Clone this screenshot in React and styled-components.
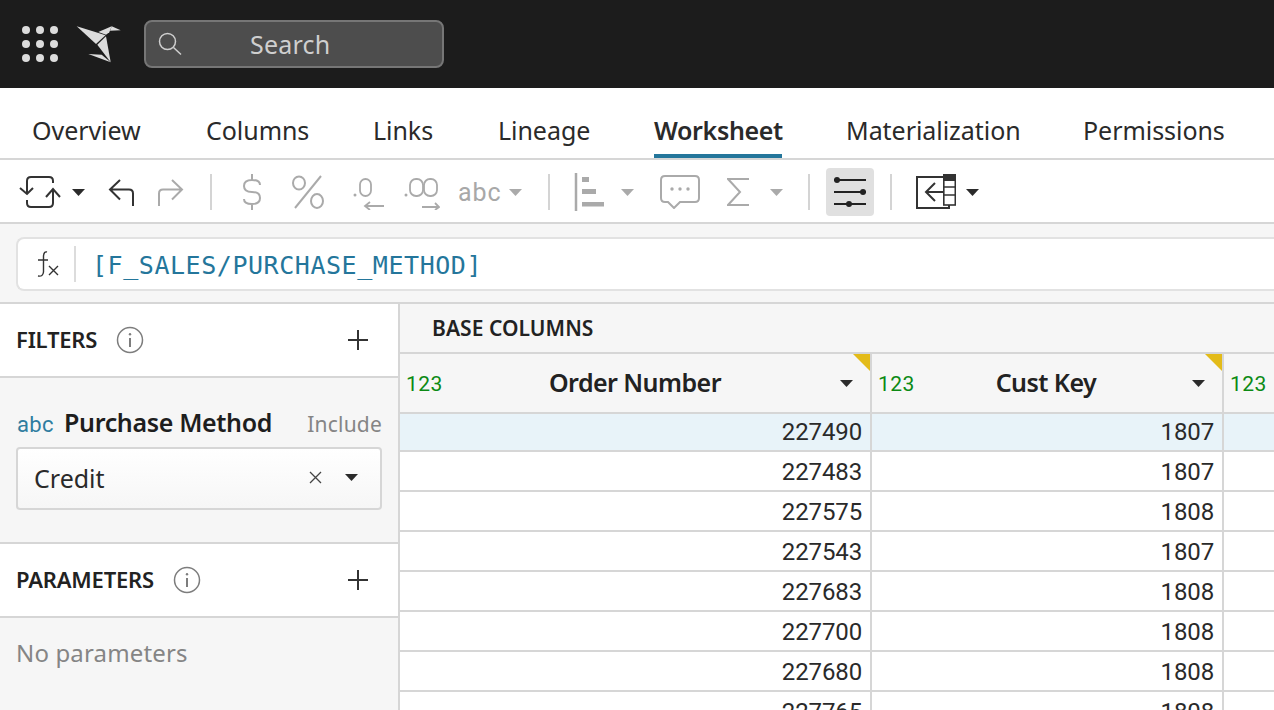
import React from 'react';
import styled, { createGlobalStyle } from 'styled-components';

const Global = createGlobalStyle`
  html, body { margin: 0; padding: 0; height: 100%; overflow: hidden; background: #fff; }
  #root { height: 100%; }
  * { box-sizing: border-box; }
`;

const SANS = `"Noto Sans", "Open Sans", sans-serif`;
const NUM = `Roboto, "Noto Sans", sans-serif`;
const LINE = '#d6d6d6';

const Page = styled.div`
  width: 1274px;
  height: 710px;
  overflow: hidden;
  display: flex;
  flex-direction: column;
  font-family: ${SANS};
  color: #1e1e1e;
`;

const TopBar = styled.header`
  height: 88px;
  flex: none;
  background: #1c1c1c;
  display: flex;
  align-items: center;
  padding: 0 0 0 22px;
`;

const SearchBox = styled.div`
  width: 300px;
  height: 48px;
  margin-left: 22px;
  background: #4d4d4d;
  border: 2px solid #767676;
  border-radius: 8px;
  display: flex;
  align-items: center;
  padding-left: 12px;
  color: #cfcfcf;
  font-size: 25px;
`;

const SearchText = styled.span`
  margin-left: 68px;
  letter-spacing: 0.2px;
`;

const Tabs = styled.nav`
  height: 72px;
  flex: none;
  display: flex;
  gap: 64px;
  padding-left: 32px;
  border-bottom: 2px solid ${LINE};
`;

const Tab = styled.div`
  width: ${p => p.$w}px;
  height: 70px;
  padding-top: 24px;
  font-size: 25px;
  line-height: 36px;
  white-space: nowrap;
  font-weight: ${p => (p.$active ? 600 : 400)};
  letter-spacing: ${p => (p.$active ? '-0.35px' : '-0.05px')};
  color: #2a2a2a;
  border-bottom: ${p => (p.$active ? '4px solid #24769b' : '0')};
`;

const Toolbar = styled.div`
  height: 64px;
  flex: none;
  display: flex;
  align-items: center;
  padding: 2px 0 0 18px;
  border-bottom: 2px solid ${LINE};
`;

const Sep = styled.span`
  width: 2px;
  height: 36px;
  background: #d4d4d4;
  flex: none;
  margin: ${p => p.$m || '0 22px'};
`;

const ToolIcon = styled.svg`
  display: block;
  flex: none;
  margin: ${p => p.$m || '0'};
`;

const Abc = styled.span`
  font-size: 25px;
  color: #a8a8a8;
  font-family: ${NUM};
  margin-left: 18px;
  letter-spacing: 0.9px;
`;

const ActiveTool = styled.div`
  width: 48px;
  height: 48px;
  background: #e0e0e0;
  border-radius: 4px;
  display: flex;
  align-items: center;
  justify-content: center;
  flex: none;
`;

const FormulaBar = styled.div`
  height: 80px;
  flex: none;
  background: #f6f6f6;
  border-bottom: 2px solid ${LINE};
  padding: 13px 0 0 16px;
`;

const FormulaInput = styled.div`
  height: 54px;
  background: #fff;
  border: 2px solid #e2e2e2;
  border-right: 0;
  border-radius: 8px 0 0 8px;
  display: flex;
  align-items: center;
  padding-left: 18px;
`;

const FormulaDivider = styled.span`
  width: 2px;
  height: 36px;
  background: #dcdcdc;
  margin: 0 16px 0 14px;
`;

const FormulaText = styled.span`
  font-family: "DejaVu Sans Mono", "Liberation Mono", monospace;
  font-size: 25px;
  letter-spacing: 0.55px;
  color: #24769b;
  padding-top: 2px;
`;

const Body = styled.div`
  flex: 1;
  min-height: 0;
  display: flex;
`;

const Side = styled.aside`
  width: 400px;
  flex: none;
  border-right: 2px solid ${LINE};
  display: flex;
  flex-direction: column;
  background: #f6f6f6;
`;

const SideHead = styled.div`
  height: 74px;
  flex: none;
  background: #fff;
  border-bottom: 2px solid ${LINE};
  display: flex;
  align-items: center;
  padding: 0 29px 0 16px;
`;

const SideTitle = styled.span`
  font-size: 22px;
  font-weight: 600;
  letter-spacing: -0.2px;
  color: #222;
  margin: -2px 19px 0 0;
`;

const Spacer = styled.span`
  flex: 1;
`;

const FilterArea = styled.div`
  height: 166px;
  flex: none;
  border-bottom: 2px solid ${LINE};
  padding: 27px 16px 0 16px;
`;

const FilterLabel = styled.div`
  display: flex;
  align-items: baseline;
  height: 41px;
`;

const AbcType = styled.span`
  font-family: ${NUM};
  font-size: 22px;
  color: #2f7da0;
  margin: 0 10px 0 1px;
  letter-spacing: 0.4px;
`;

const FilterName = styled.span`
  font-size: 25px;
  font-weight: 600;
  letter-spacing: -0.35px;
`;

const Include = styled.span`
  font-size: 21px;
  color: #858585;
  letter-spacing: 0.2px;
`;

const SelectBox = styled.div`
  height: 63px;
  margin-top: 1px;
  border: 2px solid ${LINE};
  border-radius: 4px;
  background: linear-gradient(#fff, #f6f6f6);
  display: flex;
  align-items: center;
  padding: 0 22px 2px 16px;
  font-size: 25px;
  color: #2a2a2a;
`;

const NoParams = styled.div`
  padding: 19px 16px;
  font-size: 24px;
  line-height: 32px;
  letter-spacing: 0.15px;
  color: #858585;
`;

const Main = styled.main`
  flex: 1;
  min-width: 0;
  display: flex;
  flex-direction: column;
`;

const GroupBar = styled.div`
  height: 50px;
  flex: none;
  background: #f6f6f6;
  border-bottom: 2px solid ${LINE};
  padding: 9px 0 0 32px;
  font-size: 21px;
  line-height: 30px;
  font-weight: 600;
  letter-spacing: 0.05px;
  color: #222;
`;

const Grid = styled.div`
  display: grid;
  grid-template-columns: 472px 352px 1fr;
`;

const HeadCell = styled.div`
  height: 60px;
  background: #f6f6f6;
  border-right: 2px solid ${LINE};
  border-bottom: 2px solid ${LINE};
  position: relative;
  display: flex;
  align-items: center;
  padding: 0 17px 0 6px;
  &:last-of-type { border-right: 0; }
`;

const HeadType = styled.span`
  font-family: ${NUM};
  font-size: 21px;
  color: #0c8a14;
  letter-spacing: 0.5px;
  margin-top: 2px;
`;

const HeadName = styled.span`
  flex: 1;
  text-align: center;
  font-size: 25px;
  font-weight: 600;
  letter-spacing: -0.55px;
  color: #222;
  margin-top: -2px;
  padding-right: ${p => p.$pad}px;
`;

const Corner = styled.span`
  position: absolute;
  top: 0;
  right: 0;
  width: 0;
  height: 0;
  border-style: solid;
  border-width: 0 17px 17px 0;
  border-color: transparent #e3bb19 transparent transparent;
`;

const Cell = styled.div`
  height: ${p => (p.$first ? 38 : 40)}px;
  background: ${p => (p.$first ? '#e8f3f9' : '#fff')};
  border-right: ${p => (p.$last ? 0 : `2px solid ${LINE}`)};
  border-bottom: 2px solid ${LINE};
  font-family: ${NUM};
  font-size: 24px;
  line-height: ${p => (p.$first ? 36 : 41)}px;
  text-align: right;
  padding-right: 8px;
  color: #2a2a2a;
  letter-spacing: -0.13px;
`;

const Caret = ({ color = '#2b2b2b', m }) => (
  <ToolIcon $m={m} width={13} height={7} viewBox="0 0 13 7">
    <path d="M0 0h13L6.5 7z" fill={color} />
  </ToolIcon>
);

const InfoIcon = () => (
  <ToolIcon width={28} height={28} viewBox="0 0 28 28">
    <circle cx="14" cy="14" r="12.500" fill="none" stroke="#7d7d7d" strokeWidth="1.5" />
    <path d="M14 12v9" stroke="#7d7d7d" strokeWidth="2" />
    <circle cx="14" cy="8.2" r="1.2" fill="#7d7d7d" />
  </ToolIcon>
);

const PlusIcon = () => (
  <ToolIcon width={22} height={22} viewBox="0 0 22 22">
    <path d="M11 1v20M1 11h20" stroke="#333" strokeWidth="2" />
  </ToolIcon>
);

const rows = [
  ['227490', '1807'],
  ['227483', '1807'],
  ['227575', '1808'],
  ['227543', '1807'],
  ['227683', '1808'],
  ['227700', '1808'],
  ['227680', '1808'],
  ['227765', '1808'],
];

const tabs = [
  ['Overview', 110],
  ['Columns', 103],
  ['Links', 61],
  ['Lineage', 92],
  ['Worksheet', 128],
  ['Materialization', 173],
  ['Permissions', 142],
];

export default function App() {
  return (
    <Page>
      <Global />
      <TopBar>
        <ToolIcon width={36} height={38} viewBox="0 0 36 38">
          {[0, 1, 2].map(r =>
            [0, 1, 2].map(c => (
              <circle key={`${r}${c}`} cx={4 + c * 14} cy={5 + r * 14} r="4" fill="#dcdcdc" />
            ))
          )}
        </ToolIcon>
        <ToolIcon $m="0 0 0 18px" width={46} height={40} viewBox="0 0 46 40">
          <path d="M0.7 2.300L22.500 9l7 2.200L20 20z" fill="#dcdcdc" />
          <path d="M30 12.300l4.700 26-13.400-17.600z" fill="#dcdcdc" />
          <path d="M22.300 8l13.400-5.700-2.400 6-3.300 2.400z" fill="#dcdcdc" />
          <path d="M35.700 2.300l9 4-10.700.4z" fill="#dcdcdc" />
          <path d="M12.300 30l22.400 8.300-9-7.600z" fill="#dcdcdc" />
        </ToolIcon>
        <SearchBox>
          <ToolIcon width={24} height={24} viewBox="0 0 24 24">
            <circle cx="9.500" cy="9.500" r="8" fill="none" stroke="#cfcfcf" strokeWidth="1.5" />
            <path d="M15.500 15.500l7.500 7" stroke="#cfcfcf" strokeWidth="1.5" />
          </ToolIcon>
          <SearchText>Search</SearchText>
        </SearchBox>
      </TopBar>

      <Tabs>
        {tabs.map(([t, w]) => (
          <Tab key={t} $w={w} $active={t === 'Worksheet'}>{t}</Tab>
        ))}
      </Tabs>

      <Toolbar>
        <ToolIcon width={43} height={36} viewBox="0 0 43 36">
          <path d="M9 20V7q0-4 4-4h18q4 0 4 4v2M35 15v14q0 4-4 4H13q-4 0-4-4v-3" fill="none" stroke="#333" strokeWidth="2" />
          <path d="M2 14l7 6 6-6M28 23l7-8 7 8" fill="none" stroke="#333" strokeWidth="2" />
        </ToolIcon>
        <Caret m="0 0 0 11px" />
        <ToolIcon $m="0 0 0 21px" width={28} height={28} viewBox="0 0 28 28">
          <path d="M14 2L4 11.500l10 10M4 11.500h19q4 0 4 4V28" fill="none" stroke="#333" strokeWidth="2" />
        </ToolIcon>
        <ToolIcon $m="0 0 0 22px" width={28} height={28} viewBox="0 0 28 28">
          <path d="M16 2l10 9.500-10 10M26 11.500H7q-4 0-4 4V28" fill="none" stroke="#aaa" strokeWidth="2" />
        </ToolIcon>
        <Sep $m="0 0 0 26px" />
        <ToolIcon $m="0 0 0 30px" width={20} height={36} viewBox="0 0 20 36">
          <path d="M18 11q0-5-8-5t-8 6 8 6 8 6-8 6-8-5M10 0v6M10 30v6" fill="none" stroke="#aaa" strokeWidth="2" />
        </ToolIcon>
        <ToolIcon $m="0 0 0 29px" width={34} height={34} viewBox="0 0 34 34">
          <ellipse cx="8" cy="8" rx="6" ry="6.500" fill="none" stroke="#aaa" strokeWidth="2" />
          <ellipse cx="26" cy="26" rx="6" ry="7" fill="none" stroke="#aaa" strokeWidth="2" />
          <path d="M30 1L4 33" stroke="#aaa" strokeWidth="2" />
        </ToolIcon>
        <ToolIcon $m="0 0 0 27px" width={34} height={36} viewBox="0 0 34 36">
          <circle cx="3" cy="21" r="1.500" fill="#aaa" />
          <rect x="8" y="5" width="11" height="17" rx="5.500" fill="none" stroke="#aaa" strokeWidth="1.800" />
          <path d="M32 32H13M18 28l-5 4 5 4" fill="none" stroke="#aaa" strokeWidth="1.800" />
        </ToolIcon>
        <ToolIcon $m="0 0 0 18px" width={36} height={36} viewBox="0 0 36 36">
          <circle cx="2" cy="21" r="1.500" fill="#aaa" />
          <rect x="6" y="5" width="13" height="17" rx="6" fill="none" stroke="#aaa" strokeWidth="1.800" />
          <rect x="20" y="5" width="13" height="17" rx="6" fill="none" stroke="#aaa" strokeWidth="1.800" />
          <path d="M18 33h17M31 29l4 4-4 3" fill="none" stroke="#aaa" strokeWidth="1.800" />
        </ToolIcon>
        <Abc>abc</Abc>
        <Caret color="#aaa" m="0 0 0 8px" />
        <Sep $m="0 0 0 26px" />
        <ToolIcon $m="0 0 0 24px" width={30} height={38} viewBox="0 0 30 38">
          <path d="M2 0v38" stroke="#aaa" strokeWidth="2.500" />
          <rect x="8" y="4" width="7" height="5" fill="#aaa" />
          <rect x="8" y="16" width="14" height="5" fill="#aaa" />
          <rect x="8" y="29" width="22" height="4.500" fill="#aaa" />
        </ToolIcon>
        <Caret color="#aaa" m="0 0 0 17px" />
        <ToolIcon $m="0 0 0 26px" width={40} height={34} viewBox="0 0 40 34">
          <path d="M5 1h30q4 0 4 4v18q0 4-4 4H20l-6 6-6-6H5q-4 0-4-4V5q0-4 4-4z" fill="none" stroke="#aaa" strokeWidth="2" />
          <circle cx="12" cy="14" r="1.700" fill="#aaa" />
          <circle cx="20" cy="14" r="1.700" fill="#aaa" />
          <circle cx="28" cy="14" r="1.700" fill="#aaa" />
        </ToolIcon>
        <ToolIcon $m="0 0 0 27px" width={22} height={28} viewBox="0 0 22 28">
          <path d="M22 1H1l12 13L1 27h21" fill="none" stroke="#aaa" strokeWidth="2" />
        </ToolIcon>
        <Caret color="#aaa" m="0 0 0 21px" />
        <Sep $m="0 16px 0 25px" />
        <ActiveTool>
          <ToolIcon width={34} height={30} viewBox="0 0 34 30">
            <path d="M1 3h32M1 15h32M1 27h32" stroke="#222" strokeWidth="2" />
            <circle cx="4" cy="3" r="3" fill="#222" />
            <circle cx="30" cy="15" r="3" fill="#222" />
            <circle cx="16" cy="27" r="3" fill="#222" />
          </ToolIcon>
        </ActiveTool>
        <Sep $m="0 0 0 16px" />
        <ToolIcon $m="0 0 0 24px" width={40} height={36} viewBox="0 0 40 36">
          <path d="M27 3H1v31h32v-3" fill="none" stroke="#333" strokeWidth="2" />
          <path d="M27 18H10M19 9l-9 9 9 9" fill="none" stroke="#333" strokeWidth="2" />
          <rect x="27" y="0" width="13" height="7" fill="#333" />
          <rect x="27.800" y="1" width="11.500" height="30" fill="#fff" fillOpacity="0" stroke="#333" strokeWidth="1.600" />
          <path d="M28 13h12M28 21h12" stroke="#333" strokeWidth="1.600" />
        </ToolIcon>
        <Caret m="0 0 0 10px" />
      </Toolbar>

      <FormulaBar>
        <FormulaInput>
          <ToolIcon width={24} height={28} viewBox="0 0 24 28">
            <path d="M11 2Q8 1 7.500 6v16Q7 27 2 26M2 10h10" fill="none" stroke="#333" strokeWidth="1.400" />
            <path d="M13 16l9 9M22 16l-9 9" fill="none" stroke="#333" strokeWidth="1.400" />
          </ToolIcon>
          <FormulaDivider />
          <FormulaText>[F_SALES/PURCHASE_METHOD]</FormulaText>
        </FormulaInput>
      </FormulaBar>

      <Body>
        <Side>
          <SideHead>
            <SideTitle>FILTERS</SideTitle>
            <InfoIcon />
            <Spacer />
            <PlusIcon />
          </SideHead>
          <FilterArea>
            <FilterLabel>
              <AbcType>abc</AbcType>
              <FilterName>Purchase Method</FilterName>
              <Spacer />
              <Include>Include</Include>
            </FilterLabel>
            <SelectBox>
              Credit
              <Spacer />
              <ToolIcon width={13} height={13} viewBox="0 0 13 13">
                <path d="M1 1l11 11M12 1L1 12" stroke="#444" strokeWidth="1.300" />
              </ToolIcon>
              <Caret m="0 0 0 23px" />
            </SelectBox>
          </FilterArea>
          <SideHead>
            <SideTitle>PARAMETERS</SideTitle>
            <InfoIcon />
            <Spacer />
            <PlusIcon />
          </SideHead>
          <NoParams>No parameters</NoParams>
        </Side>

        <Main>
          <GroupBar>BASE COLUMNS</GroupBar>
          <Grid>
            <HeadCell>
              <HeadType>123</HeadType>
              <HeadName $pad={13}>Order Number</HeadName>
              <Caret />
              <Corner />
            </HeadCell>
            <HeadCell>
              <HeadType>123</HeadType>
              <HeadName $pad={15}>Cust Key</HeadName>
              <Caret />
              <Corner />
            </HeadCell>
            <HeadCell>
              <HeadType>123</HeadType>
            </HeadCell>
            {rows.map((r, i) => (
              <React.Fragment key={r[0]}>
                <Cell $first={i === 0}>{r[0]}</Cell>
                <Cell $first={i === 0}>{r[1]}</Cell>
                <Cell $first={i === 0} $last />
              </React.Fragment>
            ))}
          </Grid>
        </Main>
      </Body>
    </Page>
  );
}
